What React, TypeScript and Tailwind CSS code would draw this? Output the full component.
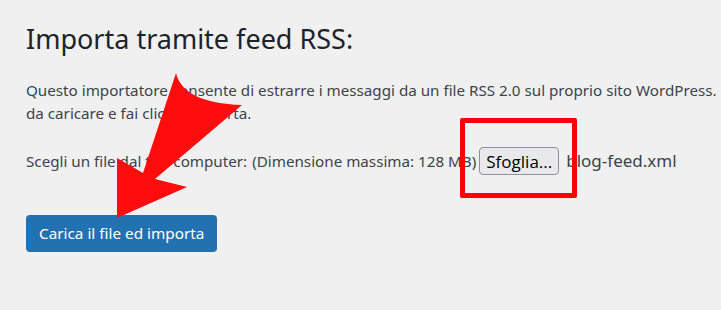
import React from "react";

export default function App() {
  return (
    <div className="relative w-[721px] h-[310px] overflow-hidden bg-[#f0f0f1]" style={{ fontFamily: '"Noto Sans", "Open Sans", sans-serif' }}>
      <div className="pl-[26px] pt-[19px]">
        <h1 className="text-[27px] leading-[40px] text-[#1d2327] whitespace-nowrap">Importa tramite feed RSS:</h1>
        <div className="mt-[20px] text-[15.2px] leading-[23px] text-[#3c434a]">
          <p className="whitespace-nowrap">Questo importatore consente di estrarre i messaggi da un file RSS 2.0 sul proprio sito WordPress.</p>
          <p className="whitespace-nowrap">da caricare e fai clic su Importa.</p>
        </div>
        <div className="mt-[21px] flex items-center h-[30px] text-[15.2px] text-[#3c434a] whitespace-nowrap">
          <span>Scegli un file dal tuo computer:</span>
          <span className="ml-[5px]">(Dimensione massima: 128 MB)</span>
          <button className="ml-[3px] h-[28px] px-[6px] rounded-[4px] border border-[#8f8f9d] bg-[#e9e9ed] text-[17px] leading-none text-black" style={{ fontFamily: '"Open Sans", sans-serif' }}>Sfoglia...</button>
          <span className="ml-[7px] text-[17px]">blog-feed.xml</span>
        </div>
        <button className="mt-[39px] h-[37px] px-[13px] rounded-[4px] bg-[#2271b1] text-white text-[15.3px]">Carica il file ed importa</button>
      </div>
      <div className="absolute left-[460px] top-[118px] w-[117px] h-[80px] border-[5px] border-[#ff0000] rounded-[2px]" />
      <svg className="absolute left-0 top-0" width="721" height="310" viewBox="0 0 721 310">
        <path d="M176 73 Q183 103 242 105 L155 179 L187 187 L117 218 L117 158 L143 173 Z" fill="#ff0d0d" />
      </svg>
    </div>
  );
}
